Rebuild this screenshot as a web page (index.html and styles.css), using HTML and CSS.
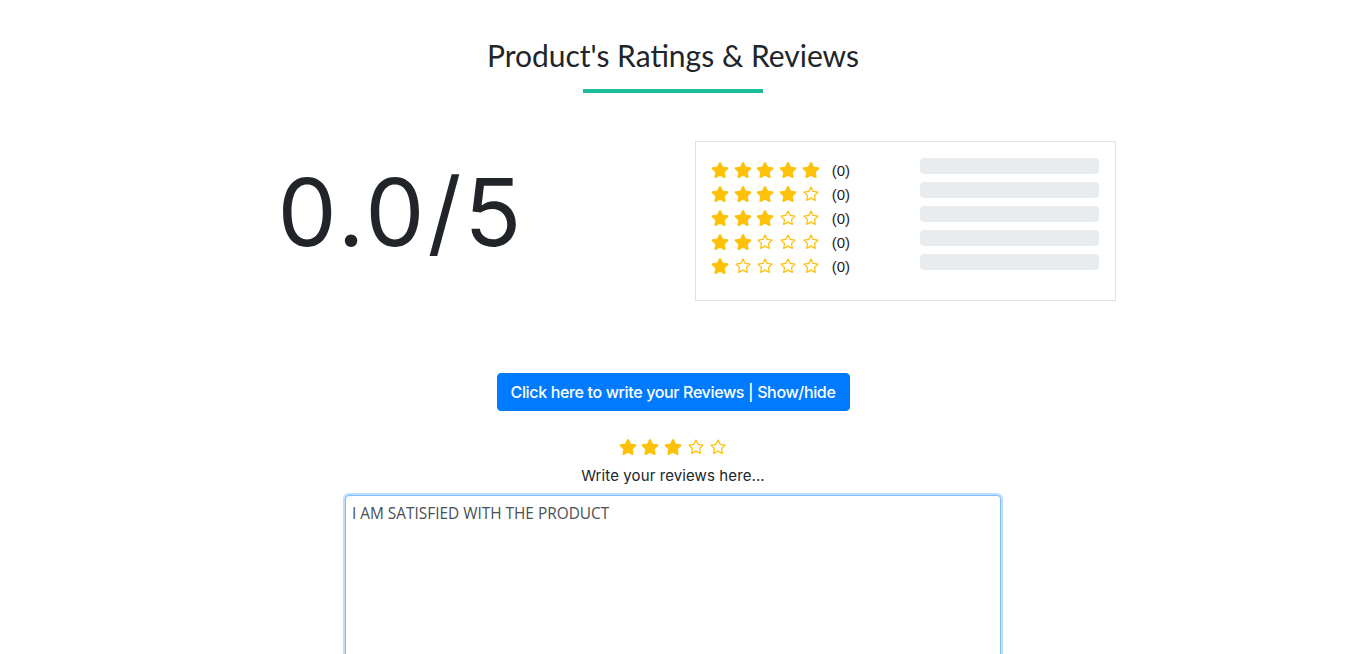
FILE: index.html
```html
<!DOCTYPE html>
<html lang="en">
<head>
<meta charset="utf-8">
<title>Product's Ratings &amp; Reviews</title>
<link rel="stylesheet" href="styles.css">
</head>
<body>
<svg class="defs" width="0" height="0" aria-hidden="true">
  <defs>
    <symbol id="s-full" viewBox="0 0 576 512">
      <path fill="#ffc107" d="M259.3 17.8L194 150.2 47.9 171.5c-26.2 3.8-36.7 36.1-17.7 54.6l105.7 103-25 145.5c-4.5 26.3 23.2 46 46.4 33.7L288 439.6l130.7 68.7c23.2 12.2 50.9-7.4 46.4-33.7l-25-145.5 105.7-103c19-18.5 8.5-50.8-17.7-54.6L382 150.2 316.7 17.8c-11.7-23.6-45.6-23.9-57.4 0z"/>
    </symbol>
    <symbol id="s-empty" viewBox="0 0 576 512">
      <path fill="none" stroke="#ffc107" stroke-width="40" stroke-linejoin="round" d="M288 30L358 172 514 195 401 305 428 461 288 387 148 461 175 305 62 195 218 172z"/>
    </symbol>
  </defs>
</svg>

<main class="reviews">
  <h2 class="title">Product's Ratings &amp; Reviews</h2>
  <div class="underline"></div>

  <div class="summary">
    <div class="score">0.0/5</div>
    <div class="breakdown">
      <div class="star-list">
        <div class="star-row">
          <span class="stars"><svg><use href="#s-full"/></svg><svg><use href="#s-full"/></svg><svg><use href="#s-full"/></svg><svg><use href="#s-full"/></svg><svg><use href="#s-full"/></svg></span>
          <span class="count">(0)</span>
        </div>
        <div class="star-row">
          <span class="stars"><svg><use href="#s-full"/></svg><svg><use href="#s-full"/></svg><svg><use href="#s-full"/></svg><svg><use href="#s-full"/></svg><svg><use href="#s-empty"/></svg></span>
          <span class="count">(0)</span>
        </div>
        <div class="star-row">
          <span class="stars"><svg><use href="#s-full"/></svg><svg><use href="#s-full"/></svg><svg><use href="#s-full"/></svg><svg><use href="#s-empty"/></svg><svg><use href="#s-empty"/></svg></span>
          <span class="count">(0)</span>
        </div>
        <div class="star-row">
          <span class="stars"><svg><use href="#s-full"/></svg><svg><use href="#s-full"/></svg><svg><use href="#s-empty"/></svg><svg><use href="#s-empty"/></svg><svg><use href="#s-empty"/></svg></span>
          <span class="count">(0)</span>
        </div>
        <div class="star-row">
          <span class="stars"><svg><use href="#s-full"/></svg><svg><use href="#s-empty"/></svg><svg><use href="#s-empty"/></svg><svg><use href="#s-empty"/></svg><svg><use href="#s-empty"/></svg></span>
          <span class="count">(0)</span>
        </div>
      </div>
      <div class="bar-list">
        <div class="bar"></div>
        <div class="bar"></div>
        <div class="bar"></div>
        <div class="bar"></div>
        <div class="bar"></div>
      </div>
    </div>
  </div>

  <button class="write-btn" type="button">Click here to write your Reviews | Show/hide</button>

  <div class="rate stars"><svg><use href="#s-full"/></svg><svg><use href="#s-full"/></svg><svg><use href="#s-full"/></svg><svg><use href="#s-empty"/></svg><svg><use href="#s-empty"/></svg></div>
  <p class="hint">Write your reviews here...</p>
  <textarea class="review-box">I AM SATISFIED WITH THE PRODUCT</textarea>
</main>
</body>
</html>
```

FILE: styles.css
```css
* { box-sizing: border-box; }

html, body {
  margin: 0;
  background: #fff;
  color: #212529;
  font-family: "Inter", "Liberation Sans", sans-serif;
  overflow: hidden;
}

.defs { position: absolute; width: 0; height: 0; }

.reviews {
  display: flex;
  flex-direction: column;
  align-items: center;
  padding-top: 37px;
}

.title {
  margin: 0;
  font-family: "Lato", "Liberation Sans", sans-serif;
  font-weight: 400;
  font-size: 30px;
  line-height: 36px;
  letter-spacing: 0;
  color: #212529;
}

.underline {
  width: 180px;
  height: 4px;
  background: #1abc9c;
  margin-top: 16px;
}

.summary {
  width: 1140px;
  display: flex;
  margin-top: 48px;
}

.score {
  width: 592px;
  padding-left: 4px;
  text-align: center;
  font-size: 94px;
  font-weight: 400;
  line-height: 1;
  letter-spacing: 3px;
  padding-top: 24px;
  color: #212529;
}

.breakdown {
  width: 421px;
  height: 160px;
  border: 1px solid #dee2e6;
  display: flex;
  padding: 16px 16px 0 15px;
}

.star-list {
  width: 209px;
  display: flex;
  flex-direction: column;
}

.star-row {
  height: 24px;
  display: flex;
  align-items: center;
}

.stars {
  display: flex;
  gap: 4.7px;
}

.stars svg {
  width: 18px;
  height: 16px;
  display: block;
}

.count {
  margin-left: 12px;
  font-family: "Liberation Sans", sans-serif;
  font-size: 15px;
  color: #212529;
}

.bar-list {
  flex: 1;
  display: flex;
  flex-direction: column;
  gap: 8px;
}

.bar {
  height: 16px;
  background: #e9ecef;
  border-radius: 4px;
}

.write-btn {
  margin-top: 72px;
  width: 353px;
  height: 38px;
  border: 1px solid #007bff;
  background: #007bff;
  color: #fff;
  border-radius: 4px;
  font-family: "Inter", "Liberation Sans", sans-serif;
  font-size: 16px;
  font-weight: 500;
  padding: 0;
  letter-spacing: -0.35px;
}

.rate {
  margin-top: 28px;
}

.hint {
  margin: 12px 0 0;
  font-size: 15px;
  line-height: 18px;
  letter-spacing: 0.1px;
  color: #212529;
}

.review-box {
  margin-top: 10px;
  width: 656px;
  height: 200px;
  border: 1px solid #80bdff;
  border-radius: 4px;
  box-shadow: 0 0 0 2px rgba(0, 123, 255, 0.25);
  padding: 7px 6px 6px;
  font-family: "Open Sans", "Liberation Sans", sans-serif;
  font-size: 15.4px;
  line-height: 22px;
  color: #495057;
  resize: none;
  outline: none;
}
```
